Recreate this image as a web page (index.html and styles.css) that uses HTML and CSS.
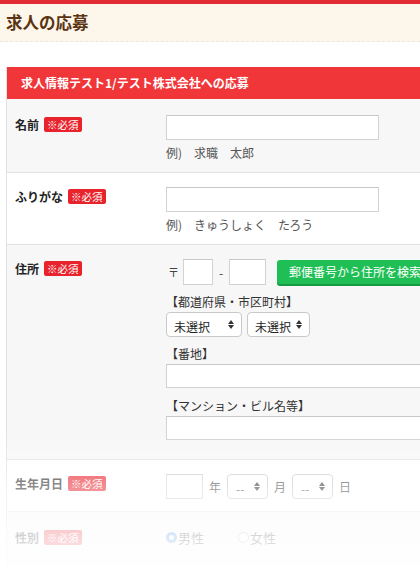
FILE: index.html
```html
<!DOCTYPE html>
<html lang="ja">
<head>
<meta charset="utf-8">
<title>求人の応募</title>
<link rel="stylesheet" href="styles.css">
</head>
<body>
<header class="page-head">
  <h1 class="page-title">求人の応募</h1>
</header>

<section class="card">
  <div class="card-head">求人情報テスト1/テスト株式会社への応募</div>

  <div class="row row-gray row-first">
    <div class="label"><span class="label-text">名前</span><span class="badge">※必須</span></div>
    <div class="field">
      <input class="text-input w-name" type="text">
      <p class="example">例)　求職　太郎</p>
    </div>
  </div>

  <div class="row">
    <div class="label"><span class="label-text">ふりがな</span><span class="badge">※必須</span></div>
    <div class="field">
      <input class="text-input w-name" type="text">
      <p class="example">例)　きゅうしょく　たろう</p>
    </div>
  </div>

  <div class="row row-gray row-address">
    <div class="label"><span class="label-text">住所</span><span class="badge">※必須</span></div>
    <div class="field">
      <div class="postal">
        <span class="postal-mark">〒</span>
        <input class="text-input w-zip1" type="text">
        <span class="dash">-</span>
        <input class="text-input w-zip2" type="text">
        <button class="btn-search" type="button">郵便番号から住所を検索</button>
      </div>
      <p class="sub-label">【都道府県・市区町村】</p>
      <div class="select-line">
        <span class="select w-pref"><select><option>未選択</option></select></span>
        <span class="select w-city"><select><option>未選択</option></select></span>
      </div>
      <p class="sub-label sub-gap">【番地】</p>
      <input class="text-input w-full" type="text">
      <p class="sub-label sub-gap2">【マンション・ビル名等】</p>
      <input class="text-input w-full" type="text">
    </div>
  </div>

  <div class="row row-birth">
    <div class="label"><span class="label-text">生年月日</span><span class="badge">※必須</span></div>
    <div class="field inline-line">
      <input class="text-input w-year" type="text">
      <span class="unit">年</span>
      <span class="select w-md small"><select><option>--</option></select></span>
      <span class="unit">月</span>
      <span class="select w-md small"><select><option>--</option></select></span>
      <span class="unit">日</span>
    </div>
  </div>

  <div class="row row-gray row-sex">
    <div class="label"><span class="label-text">性別</span><span class="badge">※必須</span></div>
    <div class="field inline-line">
      <label class="radio"><span class="radio-dot checked"></span>男性</label>
      <label class="radio"><span class="radio-dot"></span>女性</label>
    </div>
  </div>

  <div class="row">
    <div class="label"><span class="label-text">電話番号</span><span class="badge">※必須</span></div>
    <div class="field">
      <input class="text-input w-name" type="text">
    </div>
  </div>
</section>

<div class="fade"></div>
</body>
</html>
```

FILE: styles.css
```css
html, body {
  margin: 0;
  padding: 0;
  overflow: hidden;
  background: #fff;
}
body {
  font-family: "Noto Sans CJK JP", "Noto Sans", sans-serif;
  color: #222;
  width: 420px;
  height: 580px;
  position: relative;
}
.page-head {
  border-top: 4px solid #e32b35;
  background: #fdf7eb;
  border-bottom: 1px dashed #ece7dd;
  height: 37px;
}
.page-title {
  margin: 0;
  padding-left: 6px;
  font-size: 16.5px;
  line-height: 37px;
  font-weight: bold;
  color: #5a3412;
}
.card {
  margin: 25px 0 0 6px;
  width: 560px;
  border-left: 1px solid #e2e2e2;
}
.card-head {
  background: #f03639;
  color: #fff;
  font-size: 12px;
  font-weight: bold;
  height: 32px;
  line-height: 32px;
  padding-left: 14px;
}
.row {
  display: grid;
  grid-template-columns: 151px 1fr;
  padding: 14px 0 11px 8px;
  border-bottom: 1px solid #e2e2e2;
  background: #fff;
}
.row-gray {
  background: #f7f7f7;
}
.row-first {
  padding-top: 16px;
}
.label {
  display: flex;
  align-items: center;
  gap: 5px;
  height: 20px;
  margin-top: -1px;
}
.label-text {
  font-size: 12px;
  font-weight: bold;
  color: #222;
}
.badge {
  background: #e8232c;
  color: #fff;
  font-size: 10.5px;
  line-height: 15px;
  height: 15px;
  padding: 0 3px;
  border-radius: 2px;
}
.field {
  display: flex;
  flex-direction: column;
  align-items: flex-start;
}
.text-input {
  box-sizing: border-box;
  height: 25px;
  border: 1px solid #d2d2d2;
  border-top-color: #c8c8c8;
  background: #fff;
  margin: 0;
  padding: 0 4px;
  font: inherit;
}
.w-name { width: 213px; }
.w-zip1 { width: 30px; height: 26px; }
.w-zip2 { width: 37px; height: 26px; }
.w-full { width: 300px; height: 24px; }
.w-year { width: 37px; }
.example {
  margin: 5px 0 0;
  font-size: 12px;
  line-height: 16px;
  color: #555;
}
.postal {
  display: flex;
  align-items: center;
}
.postal-mark {
  font-size: 11px;
  color: #444;
  width: 17px;
  padding-left: 2px;
  box-sizing: border-box;
}
.dash {
  font-size: 12px;
  color: #444;
  width: 16px;
  text-align: center;
}
.btn-search {
  margin-left: 11px;
  height: 24px;
  border: 0;
  border-radius: 3px;
  background: #1fbf55;
  box-shadow: 0 2px 0 #179a43;
  color: #fff;
  font: inherit;
  font-size: 12px;
  padding: 0 12px;
  white-space: nowrap;
  margin-top: -1px;
}
.sub-label {
  margin: 9px 0 0;
  font-size: 12px;
  line-height: 16px;
  color: #333;
}
.sub-gap { margin-top: 9px; }
.sub-gap2 { margin-top: 10px; }
.sub-label + .text-input { margin-top: 2px; }
.select-line {
  display: flex;
  gap: 5px;
  margin-top: 2px;
}
.select {
  position: relative;
  display: inline-block;
  box-sizing: border-box;
  height: 25px;
  border: 1px solid #c9c9c9;
  border-radius: 4px;
  background: #fff;
}
.select select {
  appearance: none;
  -webkit-appearance: none;
  border: 0;
  background: transparent;
  font: inherit;
  font-size: 12px;
  color: #222;
  height: 23px;
  width: 100%;
  padding: 0 0 0 7px;
  margin: 0;
  outline: none;
}
.select::before,
.select::after {
  content: "";
  position: absolute;
  right: 7px;
  border-left: 3px solid transparent;
  border-right: 3px solid transparent;
}
.select::before {
  top: 7px;
  border-bottom: 4px solid #333;
}
.select::after {
  top: 12px;
  border-top: 4px solid #333;
}
.w-pref { width: 76px; }
.w-city { width: 63px; }
.w-md { width: 41px; }
.select.small select { padding-left: 8px; color: #555; }
.row-address { padding-bottom: 19px; }
.inline-line {
  flex-direction: row;
  align-items: center;
}
.unit {
  font-size: 12px;
  color: #444;
  margin: 0 6px 0 6px;
}
.row-birth { padding-bottom: 12px; }
.row-sex { padding-bottom: 16px; padding-top: 16px; }
.radio {
  display: flex;
  align-items: center;
  font-size: 13px;
  color: #333;
  margin-right: 34px;
  height: 16px;
}
.radio-dot {
  box-sizing: border-box;
  width: 11px;
  height: 11px;
  border-radius: 50%;
  border: 1px solid #aaa;
  background: #fff;
  margin-right: 1px;
}
.radio-dot.checked {
  border: 3px solid #3b8de8;
  background: #fff;
}
.fade {
  position: absolute;
  left: 0;
  right: 0;
  top: 430px;
  height: 150px;
  background: linear-gradient(to bottom, rgba(255,255,255,0) 0%, rgba(255,255,255,0.45) 35%, rgba(255,255,255,0.8) 70%, rgba(255,255,255,0.98) 100%);
  pointer-events: none;
}
```
